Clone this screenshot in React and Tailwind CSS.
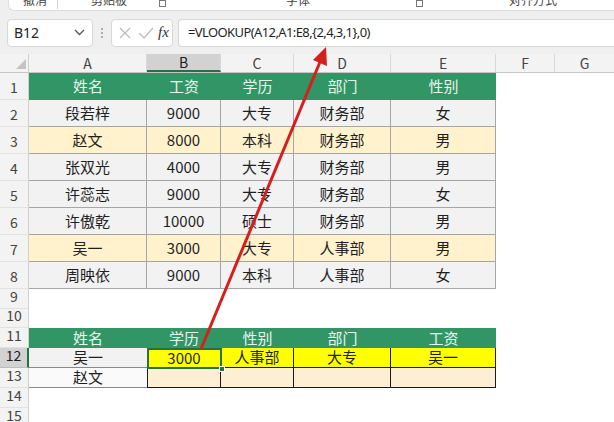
import React from "react";

const W = { n: 29, A: 118, B: 74, C: 73, D: 97, E: 105, F: 59 };
const font = { fontFamily: '"Noto Sans CJK SC", "Noto Sans", sans-serif' };

const data = [
  ["段若梓", "9000", "大专", "财务部", "女", "g"],
  ["赵文", "8000", "本科", "财务部", "男", "o"],
  ["张双光", "4000", "大专", "财务部", "男", "g"],
  ["许蕊志", "9000", "大专", "财务部", "女", "g"],
  ["许傲乾", "10000", "硕士", "财务部", "男", "g"],
  ["吴一", "3000", "大专", "人事部", "男", "o"],
  ["周映依", "9000", "本科", "人事部", "女", "g"],
];

function RowNum({ n, h, active }) {
  return (
    <div
      className={`shrink-0 w-[29px] flex items-end justify-center pb-[1px] text-[14px] border-b ${
        active
          ? "bg-[#d2d2d2] text-[#1d1d1d] border-r-2 border-r-[#217346] border-b-[#bdbdbd]"
          : "bg-[#f3f3f3] text-[#444] border-r border-r-[#d0d0d0] border-b-[#e2e2e2]"
      }`}
      style={{ height: h }}
    >
      {n}
    </div>
  );
}

function Cell({ w, cls = "", children }) {
  return (
    <div
      className={`shrink-0 flex items-center justify-center text-[15px] text-[#1f1f1f] ${cls}`}
      style={{ width: w }}
    >
      {children}
    </div>
  );
}

export default function App() {
  const cols = ["A", "B", "C", "D", "E", "F"];
  return (
    <div className="w-[614px] h-[422px] overflow-hidden bg-white relative" style={font}>
      {/* ribbon remnant */}
      <div className="h-[11px] bg-[#efefef] pl-[8px]">
        <div className="h-[11px] bg-white rounded-bl-[6px] border-b border-l border-[#dcdcdc] flex items-end text-[12px] text-[#444] leading-none overflow-hidden">
          <span className="ml-[14px] mb-[4px]">撤消</span>
          <span className="ml-[10px] mb-[1px] w-px h-[10px] bg-[#cfcfcf]" />
          <span className="ml-[33px] mb-[4px]">剪贴板</span>
          <span className="ml-[32px] mb-[3px] w-[7px] h-[7px] border border-[#777]" />
          <span className="ml-[120px] mb-[4px]">字体</span>
          <span className="ml-[106px] mb-[3px] w-[7px] h-[7px] border border-[#777]" />
          <span className="ml-[86px] mb-[4px]">对齐方式</span>
        </div>
      </div>

      {/* formula bar */}
      <div className="h-[43px] bg-[#efefef] flex items-center pl-[7px]">
        <div className="w-[86px] h-[28px] bg-white rounded-[4px] border border-[#d8d8d8] flex items-center justify-between pl-[6px] pr-[7px]">
          <span className="text-[14px] text-[#222]" style={{ fontFamily: '"Noto Sans", sans-serif' }}>B12</span>
          <svg width="11" height="7" viewBox="0 0 11 7">
            <path d="M1 1 L5.5 5.5 L10 1" fill="none" stroke="#555" strokeWidth="1.3" />
          </svg>
        </div>
        <div className="w-[18px] flex flex-col items-center gap-[2px]">
          <span className="w-[2px] h-[2px] bg-[#999] rounded-full" />
          <span className="w-[2px] h-[2px] bg-[#999] rounded-full" />
          <span className="w-[2px] h-[2px] bg-[#999] rounded-full" />
        </div>
        <div className="w-[62px] h-[28px] bg-white rounded-[4px] border border-[#d8d8d8] flex items-center pl-[6px]">
          <svg width="14" height="14" viewBox="0 0 14 14">
            <path d="M2 2 L12 12 M12 2 L2 12" stroke="#bdbdbd" strokeWidth="1.3" />
          </svg>
          <svg width="16" height="14" viewBox="0 0 16 14" className="ml-[6px]">
            <path d="M1 7 L6 12 L15 2" fill="none" stroke="#bdbdbd" strokeWidth="1.3" />
          </svg>
          <span className="ml-[4px] text-[15px] italic text-[#333]" style={{ fontFamily: '"Liberation Serif", serif' }}>
            fx
          </span>
        </div>
        <div className="ml-[5px] flex-1 h-[28px] bg-white rounded-l-[4px] border border-r-0 border-[#d8d8d8] flex items-center pl-[9px] text-[13px] tracking-[-0.6px] text-[#1f1f1f]" style={{ fontFamily: '"Noto Sans", sans-serif' }}>
          =VLOOKUP(A12,A1:E8,{"{"}2,4,3,1{"}"},0)
        </div>
      </div>

      {/* column headers */}
      <div className="flex h-[19px] bg-[#f3f3f3] border-b border-[#c6c6c6]">
        <div className="shrink-0 w-[29px] border-r border-[#d0d0d0] relative">
          <svg width="29" height="19" viewBox="0 0 29 19" className="absolute inset-0">
            <path d="M26 5 L26 15 L16 15 Z" fill="#c4c4c4" />
          </svg>
        </div>
        {cols.map((c) => (
          <div
            key={c}
            className={`shrink-0 flex items-center justify-center text-[14px] border-r border-[#d8d8d8] ${
              c === "B" ? "bg-[#d2d2d2] text-[#1d1d1d] border-b-2 border-b-[#217346]" : "text-[#444]"
            }`}
            style={{ width: W[c] }}
          >
            {c}
          </div>
        ))}
        <div className="flex-1 flex items-center justify-center text-[14px] text-[#444]">G</div>
      </div>

      {/* row 1 header */}
      <div className="flex h-[27px]">
        <RowNum n={1} h={27} />
        {["姓名", "工资", "学历", "部门", "性别"].map((t, i) => (
          <Cell key={t} w={W[cols[i]]} cls="bg-[#329565] text-[#eaf6ee]">
            {t}
          </Cell>
        ))}
      </div>

      {/* rows 2-8 */}
      {data.map((r, i) => {
        const bg = r[5] === "o" ? "bg-[#fff2cc]" : "bg-[#f2f2f2]";
        return (
          <div key={i} className="flex h-[27px]">
            <RowNum n={i + 2} h={27} />
            {r.slice(0, 5).map((t, j) => (
              <Cell key={j} w={W[cols[j]]} cls={`${bg} border-r border-b border-[#a6a6a6]`}>
                {t}
              </Cell>
            ))}
          </div>
        );
      })}

      <div className="flex h-[20px]">
        <RowNum n={9} h={20} />
      </div>
      <div className="flex h-[19px]">
        <RowNum n={10} h={19} />
      </div>

      {/* row 11 */}
      <div className="flex h-[20px]">
        <RowNum n={11} h={20} />
        {["姓名", "学历", "性别", "部门", "工资"].map((t, i) => (
          <Cell key={t} w={W[cols[i]]} cls="bg-[#329565] text-[#eaf6ee]">
            {t}
          </Cell>
        ))}
      </div>

      {/* row 12 */}
      <div className="flex h-[20px]">
        <RowNum n={12} h={20} active />
        <Cell w={W.A} cls="bg-[#f2f2f2] border-b border-[#8a8a8a]">吴一</Cell>
        <Cell w={W.B} cls="bg-[#ffff00] relative">
          3000
          <span className="absolute left-0 top-0 right-[-1px] bottom-[-1px] border-2 border-[#217346]" />
          <span className="absolute right-[-4px] bottom-[-4px] w-[6px] h-[6px] bg-[#217346] border border-white" />
        </Cell>
        <Cell w={W.C} cls="bg-[#ffff00] border-r border-b border-[#1a1a1a]">人事部</Cell>
        <Cell w={W.D} cls="bg-[#ffff00] border-r border-b border-[#1a1a1a]">大专</Cell>
        <Cell w={W.E} cls="bg-[#ffff00] border-r border-b border-[#1a1a1a]">吴一</Cell>
      </div>

      {/* row 13 */}
      <div className="flex h-[20px]">
        <RowNum n={13} h={20} />
        <Cell w={W.A} cls="bg-[#fafafa] border-b border-[#8a8a8a]">赵文</Cell>
        <Cell w={W.B} cls="bg-[#fdefd3] border-l border-r border-b border-[#1a1a1a]" />
        <Cell w={W.C} cls="bg-[#fdefd3] border-r border-b border-[#1a1a1a]" />
        <Cell w={W.D} cls="bg-[#fdefd3] border-r border-b border-[#1a1a1a]" />
        <Cell w={W.E} cls="bg-[#fdefd3] border-r border-b border-[#1a1a1a]" />
      </div>

      <div className="flex h-[20px]">
        <RowNum n={14} h={20} />
      </div>
      <div className="flex h-[20px]">
        <RowNum n={15} h={20} />
      </div>

      {/* annotation arrow */}
      <svg className="absolute left-0 top-0 pointer-events-none" width="614" height="422" viewBox="0 0 614 422">
        <line x1="201" y1="349" x2="320" y2="62" stroke="#d41f1f" strokeWidth="3" />
        <path d="M326 47 L327 66 L313 60 Z" fill="#d41f1f" />
      </svg>
    </div>
  );
}
